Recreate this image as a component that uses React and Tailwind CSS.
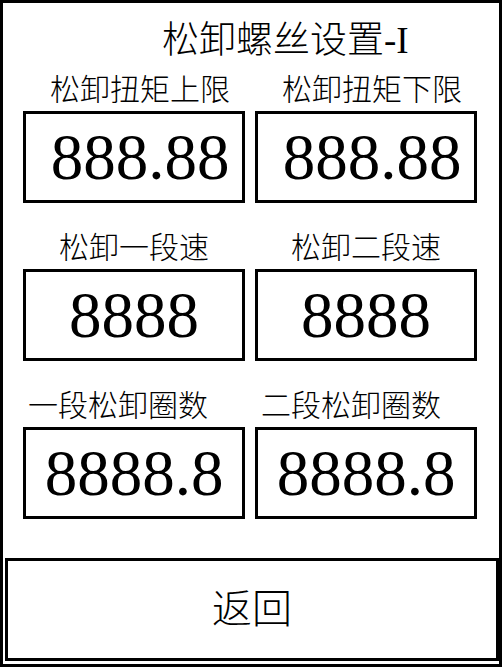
import React from 'react';

const fields = [
  { label: '松卸扭矩上限', value: '888.88', labelPad: 'pl-3', valuePad: 'pl-3' },
  { label: '松卸扭矩下限', value: '888.88', labelPad: 'pl-3', valuePad: 'pl-3' },
  { label: '松卸一段速', value: '8888', labelPad: '', valuePad: '' },
  { label: '松卸二段速', value: '8888', labelPad: '', valuePad: '' },
  { label: '一段松卸圈数', value: '8888.8', labelPad: 'pr-[32px]', valuePad: '' },
  { label: '二段松卸圈数', value: '8888.8', labelPad: 'pr-[30px]', valuePad: '' },
];

const font = { fontFamily: '"Liberation Serif", "Noto Sans CJK SC", serif' };

const Field = ({ label, value, labelPad, valuePad }) => (
  <div className="flex flex-col">
    <div className={`h-[30px] text-center text-[30px] leading-[30px] font-light text-black ${labelPad}`}>{label}</div>
    <div
      className={`mt-[6px] flex h-[92px] items-center justify-center border-[3px] border-black text-[65px] leading-none text-black ${valuePad}`}
    >
      {value}
    </div>
  </div>
);

export default function App() {
  return (
    <div className="flex h-[667px] w-[502px] flex-col border-[3px] border-black bg-white" style={font}>
      <div className="mt-[18px] pl-[159px] text-[37px] leading-[40px] font-light text-black">松卸螺丝设置-I</div>

      <div className="mt-[14px] ml-[20px] grid w-[454px] grid-cols-2 gap-x-[10px] gap-y-[30px]">
        {fields.map((f) => (
          <Field key={f.label} {...f} />
        ))}
      </div>

      <button className="mt-auto mb-[3px] ml-[2px] flex h-[103px] w-[494px] items-center justify-center border-[3px] border-black bg-white text-[40px] leading-none font-light text-black">
        返回
      </button>
    </div>
  );
}
